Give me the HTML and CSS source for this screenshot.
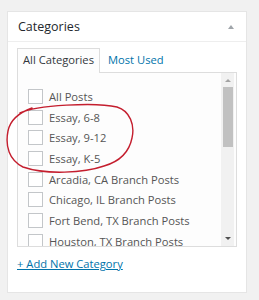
FILE: index.html
```html
<!DOCTYPE html>
<html lang="en">
  <head>
    <meta charset="UTF-8" />
    <title>Categories</title>
    <link rel="stylesheet" href="styles.css">
  </head>
  <body>
    <div class="panel">
      <div class="panel-head">
        <h2 class="panel-title">Categories</h2>
        <span class="toggle"></span>
      </div>
      <div class="panel-body">
        <div class="tabs">
          <div class="tab active">All Categories</div>
          <div class="tab">Most Used</div>
        </div>
        <div class="box">
          <ul class="cats">
            <li class="cat"><span class="check"></span>All Posts</li>
            <li class="cat"><span class="check"></span>Essay, 6-8</li>
            <li class="cat"><span class="check"></span>Essay, 9-12</li>
            <li class="cat"><span class="check"></span>Essay, K-5</li>
            <li class="cat"><span class="check"></span>Arcadia, CA Branch Posts</li>
            <li class="cat"><span class="check"></span>Chicago, IL Branch Posts</li>
            <li class="cat"><span class="check"></span>Fort Bend, TX Branch Posts</li>
            <li class="cat"><span class="check"></span>Houston, TX Branch Posts</li>
          </ul>
          <div class="scrollbar">
            <span class="arrow up"></span>
            <div class="thumb"></div>
            <span class="arrow down"></span>
          </div>
        </div>
        <a class="add-link" href="#">+ Add New Category</a>
      </div>
      <!-- hand drawn circle round the essay rows -->
      <svg class="scribble" width="135" height="78" viewBox="0 0 135 78">
        <path d="M14 12 C 30 4, 90 1, 111 6 C 124 10, 129 24, 126 37 C 123 52, 112 61, 98 65 C 78 72, 40 74, 17 66 C 3 59, -1 45, 2 30 C 4 20, 12 12, 26 7" fill="none" stroke="#c41e2e" stroke-width="1.4" stroke-linecap="round" />
      </svg>
    </div>
  </body>
</html>
```

FILE: styles.css
```css
body {
  margin: 0;
  background: #f1f1f1;
  font-family: "Open Sans", "Liberation Sans", sans-serif;
  color: #555;
  width: 259px;
  height: 300px;
  overflow: hidden;
}
.panel {
  position: relative;
  margin: 11px 0 0 7px;
  width: 238px;
  background: #fff;
  border: 1px solid #e5e5e5;
  padding-bottom: 19px;
}
.panel-head {
  display: flex;
  align-items: center;
  justify-content: space-between;
  height: 29px;
  padding: 0 12px 0 10px;
  border-bottom: 1px solid #eee;
}
.panel-title {
  margin: 0;
  font-size: 12.5px;
  font-weight: normal;
  color: #23282d;
}
.toggle {
  width: 0;
  height: 0;
  border-left: 3px solid transparent;
  border-right: 3px solid transparent;
  border-bottom: 4px solid #a0a5aa;
}
.panel-body {
  padding: 7px 0 0 9px;
}
.tabs {
  display: flex;
  align-items: flex-end;
  font-size: 11.2px;
  height: 23px;
}
.tab {
  padding: 0 5px;
  height: 23px;
  line-height: 22px;
  color: #0073aa;
  margin-left: 3px;
}
.tab.active {
  margin-left: 0;
  color: #32373c;
  border: 1px solid #ddd;
  border-bottom: none;
  background: #fdfdfd;
  height: 24px;
  margin-bottom: -1px;
  position: relative;
  z-index: 1;
}
.box {
  display: flex;
  width: 218px;
  height: 173px;
  border: 1px solid #ddd;
  background: #fdfdfd;
  overflow: hidden;
}
.cats {
  flex: 1;
  list-style: none;
  margin: 0;
  padding: 13px 0 0 10px;
  font-size: 11.2px;
}
.cat {
  display: flex;
  align-items: center;
  height: 20.7px;
  white-space: nowrap;
  color: #555;
}
.check {
  width: 13px;
  height: 13px;
  border: 1px solid #c3c6c9;
  background: #fff;
  margin-right: 6px;
  flex: none;
}
.scrollbar {
  width: 13px;
  margin-right: 2px;
  background: #f1f1f1;
  display: flex;
  flex-direction: column;
  align-items: center;
}
.arrow {
  width: 0;
  height: 0;
  border-left: 3px solid transparent;
  border-right: 3px solid transparent;
}
.arrow.up {
  margin: 6px 0 5px;
  border-bottom: 3px solid #a3a3a3;
}
.arrow.down {
  margin-top: auto;
  margin-bottom: 6px;
  border-top: 3px solid #505050;
}
.thumb {
  width: 10px;
  height: 60px;
  background: #c1c1c1;
}
.add-link {
  display: inline-block;
  margin-top: 9px;
  font-size: 11.2px;
  color: #0073aa;
  text-decoration: underline;
}
.scribble {
  position: absolute;
  left: -2px;
  top: 89px;
}
```
